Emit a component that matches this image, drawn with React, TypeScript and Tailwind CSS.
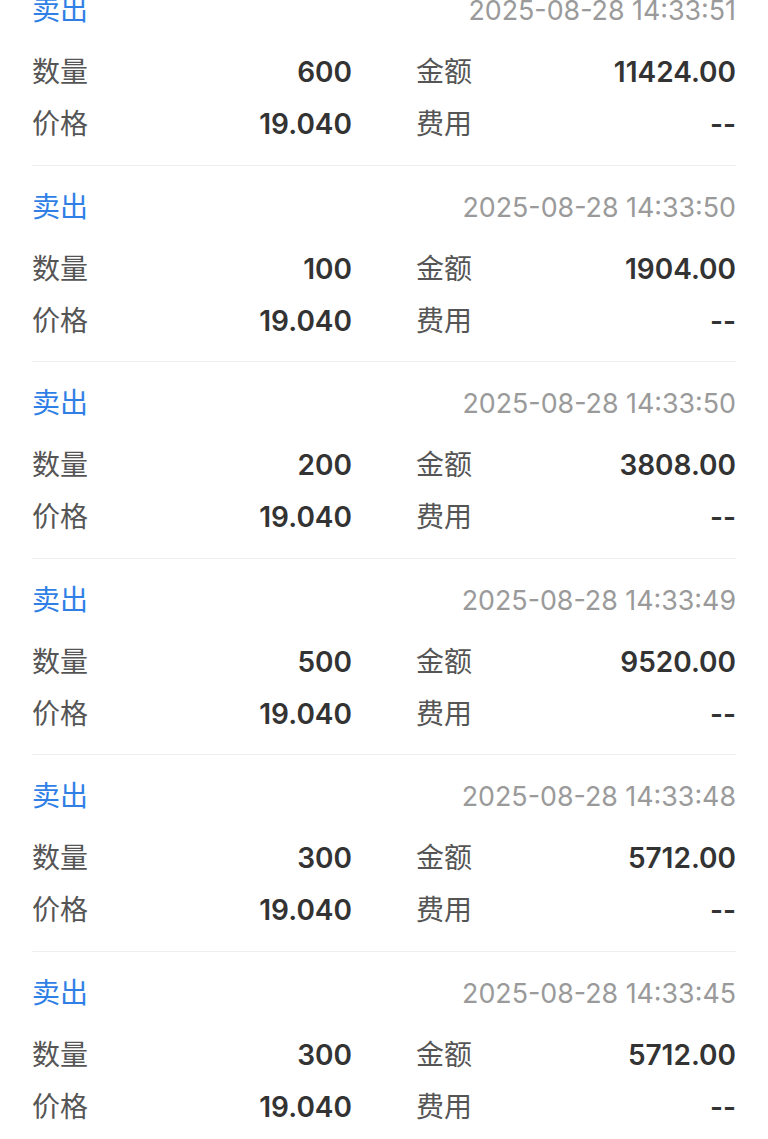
import React from "react";

const trades = [
  { time: "2025-08-28 14:33:51", qty: "600", amount: "11424.00" },
  { time: "2025-08-28 14:33:50", qty: "100", amount: "1904.00" },
  { time: "2025-08-28 14:33:50", qty: "200", amount: "3808.00" },
  { time: "2025-08-28 14:33:49", qty: "500", amount: "9520.00" },
  { time: "2025-08-28 14:33:48", qty: "300", amount: "5712.00" },
  { time: "2025-08-28 14:33:45", qty: "300", amount: "5712.00" },
];

const Cell = ({ label, value }: { label: string; value: string }) => (
  <div className="flex items-center justify-between h-[52px]">
    <span className="text-[28px] text-[#555555]">{label}</span>
    <span className="text-[28px] font-semibold text-[#333333]">{value}</span>
  </div>
);

const TradeItem = ({ time, qty, amount }: { time: string; qty: string; amount: string }) => (
  <div className="pt-[21px] pb-[14.6px] border-b border-[#eeeeee]">
    <div className="flex items-center justify-between h-[40px]">
      <span className="text-[28px] text-[#2f7fe6]">卖出</span>
      <span className="text-[26.8px] text-[#9a9a9a]">{time}</span>
    </div>
    <div className="grid grid-cols-2 gap-x-[64px] mt-[16px]">
      <Cell label="数量" value={qty} />
      <Cell label="金额" value={amount} />
      <Cell label="价格" value="19.040" />
      <Cell label="费用" value="--" />
    </div>
  </div>
);

export default function App() {
  return (
    <div
      className="w-[768px] h-[1139px] overflow-hidden bg-white px-[32px]"
      style={{ fontFamily: '"Inter", "Noto Sans CJK SC", sans-serif' }}
    >
      <div className="-mt-[31px]">
        {trades.map((t, i) => (
          <TradeItem key={i} {...t} />
        ))}
      </div>
    </div>
  );
}
